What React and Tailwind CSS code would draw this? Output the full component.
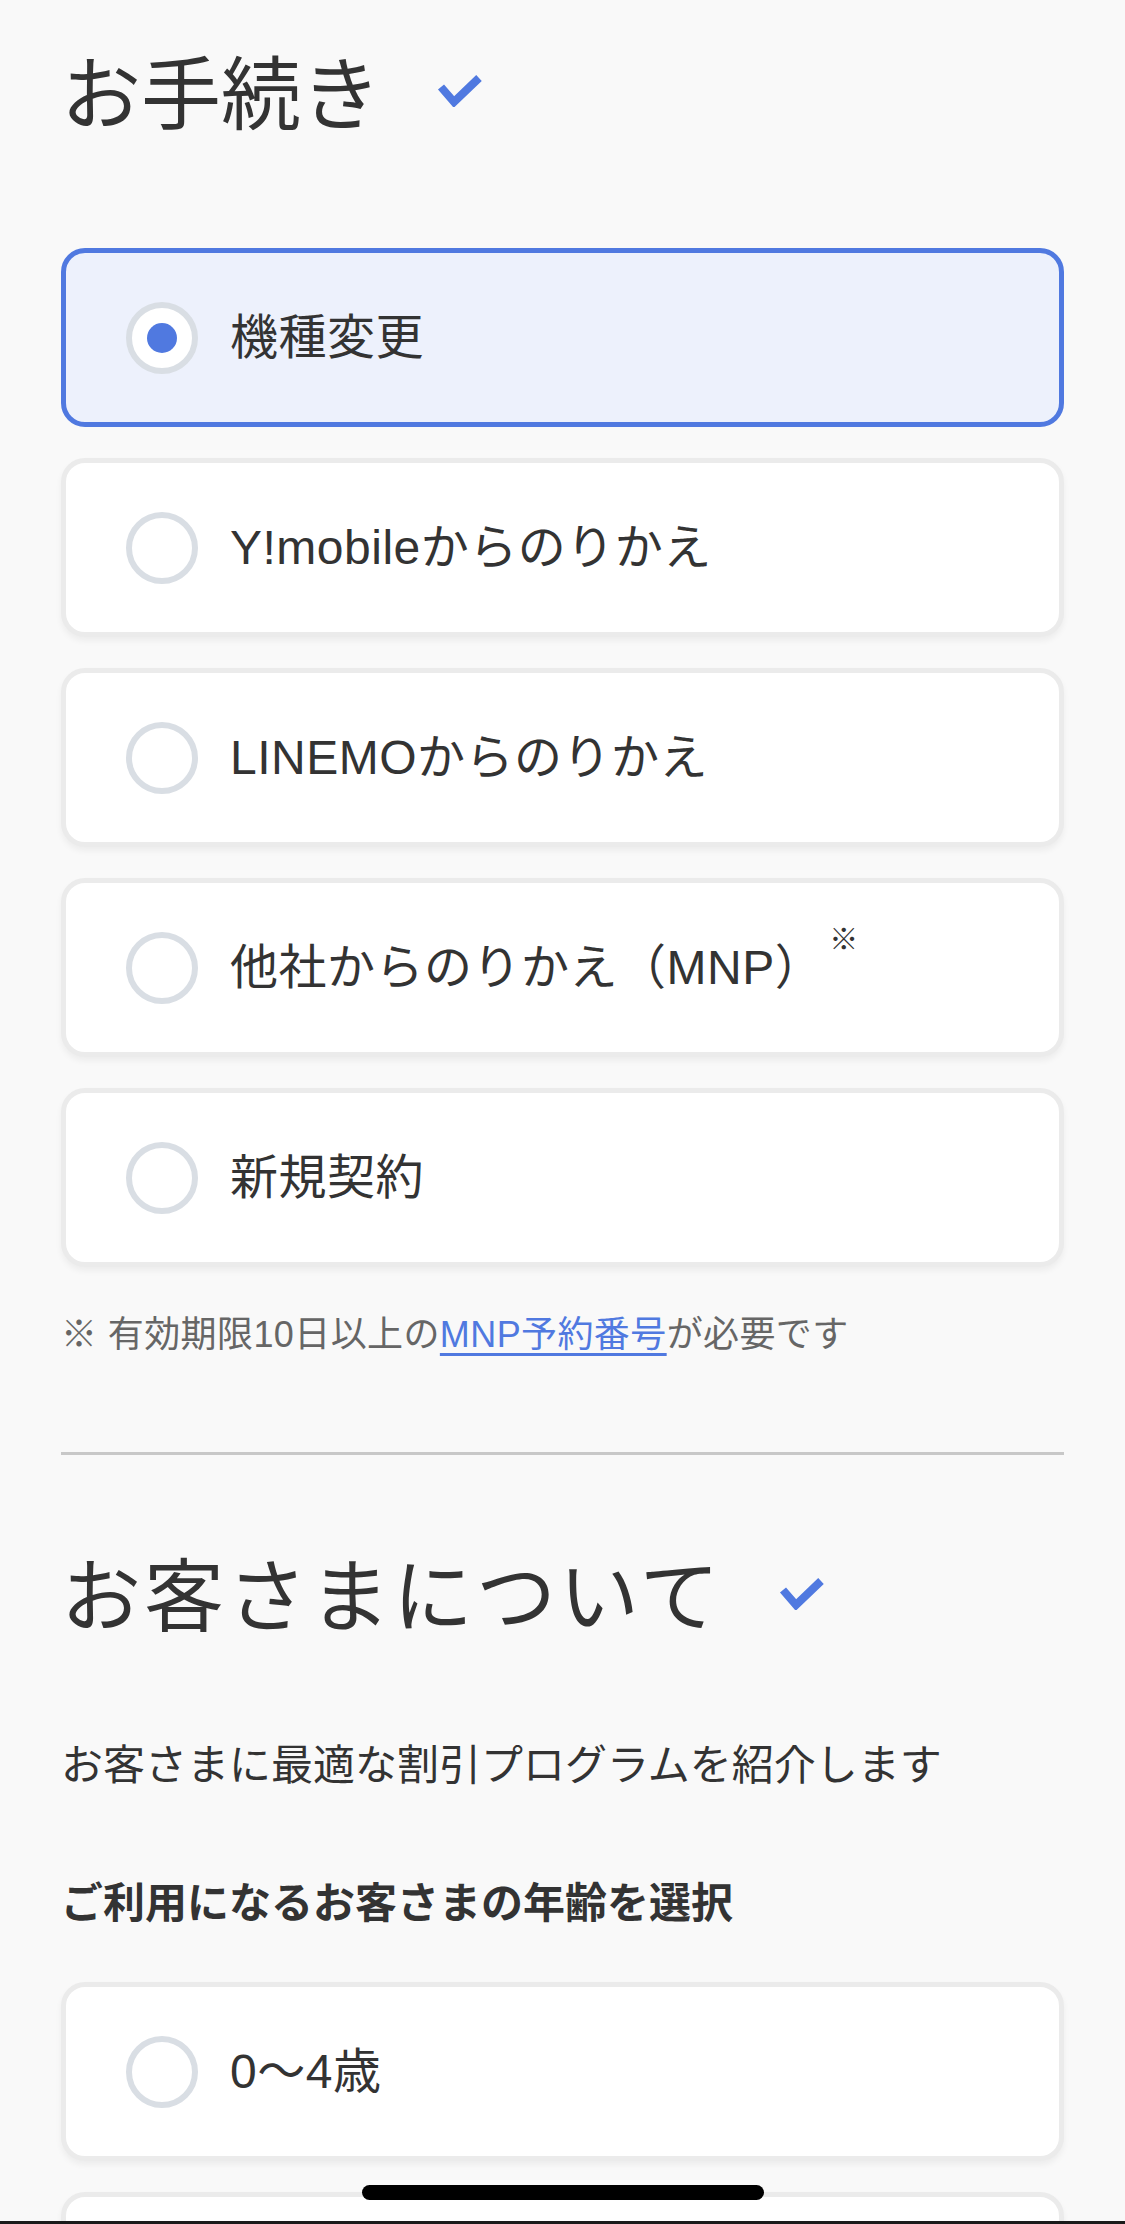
import React from 'react';

const FONT = { fontFamily: '"Liberation Sans", "Noto Sans CJK JP", sans-serif' };

const Check = () => (
  <svg width="46" height="32" viewBox="0 0 46 32" className="shrink-0">
    <path d="M4 12 L17 27 L42 3" fill="none" stroke="#5079e0" strokeWidth="8" strokeLinejoin="miter" />
  </svg>
);

const Radio = ({ checked }) => (
  <div className="w-[72px] h-[72px] rounded-full border-[6px] border-[#d9dee4] bg-white shrink-0 flex items-center justify-center">
    {checked && <div className="w-[30px] h-[30px] rounded-full bg-[#5079e0]" />}
  </div>
);

const OptionCard = ({ label, checked, note }) => (
  <div
    className={
      checked
        ? 'h-[179px] rounded-[24px] border-[5px] border-[#5079e0] bg-[#edf1fc] flex items-center pl-[60px] gap-[32px]'
        : 'h-[179px] rounded-[24px] border-[5px] border-[#ebebeb] bg-white shadow-[0_4px_6px_rgba(0,0,0,0.05)] flex items-center pl-[60px] gap-[32px]'
    }
  >
    <Radio checked={checked} />
    {label && (
      <span className="text-[48px] leading-none text-[#333] whitespace-nowrap tracking-[0.5px]">
        {label}
        {note && <sup className="text-[29px] ml-[6px] relative -top-[34px]">※</sup>}
      </span>
    )}
  </div>
);

const procedures = [
  { label: '機種変更', checked: true },
  { label: 'Y!mobileからのりかえ' },
  { label: 'LINEMOからのりかえ' },
  { label: '他社からのりかえ（MNP）', note: true },
  { label: '新規契約' },
];

// second card is below the fold; its label isn't visible
const ages = ['0〜4歳', ''];

export default function App() {
  return (
    <div className="relative w-[1125px] h-[2224px] overflow-hidden bg-[#f9f9f9]" style={FONT}>
      <div className="px-[61px] pt-[38px]">
        {/* お手続き */}
        <div className="flex items-center">
          <h1 className="text-[80px] leading-[116px] text-[#333] font-normal">お手続き</h1>
          <div className="ml-[56px] -mt-[10px]">
            <Check />
          </div>
        </div>

        <div className="mt-[94px] flex flex-col gap-[31px]">
          {procedures.map((p) => (
            <OptionCard key={p.label} {...p} />
          ))}
        </div>

        <p className="mt-[50px] text-[36px] leading-none text-[#666] whitespace-nowrap tracking-[0.4px]">
          ※ 有効期限10日以上の
          <a className="text-[#5079e0] underline underline-offset-[6px] decoration-[3px]">MNP予約番号</a>
          が必要です
        </p>

        <div className="mt-[99px] h-[3px] bg-[#c8c8c8]" />

        {/* お客さまについて */}
        <div className="mt-[85px] flex items-center">
          <h2 className="text-[80px] leading-[116px] text-[#333] font-normal tracking-[3px]">お客さまについて</h2>
          <div className="ml-[56px] -mt-[8px]">
            <Check />
          </div>
        </div>

        <p className="mt-[89px] text-[42px] leading-none text-[#333] whitespace-nowrap">
          お客さまに最適な割引プログラムを紹介します
        </p>

        <p className="mt-[96px] text-[42px] leading-none text-[#333] font-bold whitespace-nowrap">
          ご利用になるお客さまの年齢を選択
        </p>

        <div className="mt-[57px] flex flex-col gap-[31px]">
          {ages.map((a, i) => (
            <OptionCard key={i} label={a} />
          ))}
        </div>
      </div>

      {/* home indicator */}
      <div className="absolute left-[362px] bottom-[24px] w-[402px] h-[15px] rounded-full bg-black" />
      <div className="absolute left-0 right-0 bottom-0 h-[3px] bg-[#1a1a1a]" />
    </div>
  );
}
